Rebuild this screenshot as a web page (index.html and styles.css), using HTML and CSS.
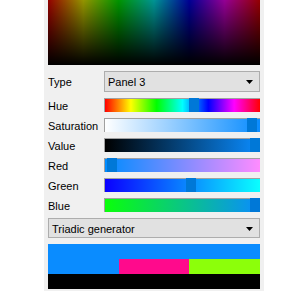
FILE: index.html
```html
<!DOCTYPE html>
<html>
<head>
  <title>Color picker</title>
  <meta name="viewport" content="width=device-width, initial-scale=1.0">
  <link rel="stylesheet" href="styles.css">
</head>
<body>
  <div class="panel">
    <div class="field"></div>

    <div class="row combo-row">
      <label>Type</label>
      <div class="combo">
        <span>Panel 3</span>
        <svg width="7" height="4" viewBox="0 0 7 4"><polygon points="0,0 7,0 3.5,4" fill="#000"/></svg>
      </div>
    </div>

    <div class="sliders">
      <div class="row">
        <label>Hue</label>
        <div class="bar hue"><div class="handle" style="left: 84px"></div></div>
      </div>
      <div class="row">
        <label>Saturation</label>
        <div class="bar sat"><div class="handle" style="left: 142px"></div></div>
      </div>
      <div class="row">
        <label>Value</label>
        <div class="bar val"><div class="handle" style="left: 145px"></div></div>
      </div>
      <div class="row">
        <label>Red</label>
        <div class="bar red"><div class="handle" style="left: 2px"></div></div>
      </div>
      <div class="row">
        <label>Green</label>
        <div class="bar green"><div class="handle" style="left: 81px"></div></div>
      </div>
      <div class="row">
        <label>Blue</label>
        <div class="bar blue"><div class="handle" style="left: 145px"></div></div>
      </div>
    </div>

    <div class="combo wide">
      <span>Triadic generator</span>
      <svg width="7" height="4" viewBox="0 0 7 4"><polygon points="0,0 7,0 3.5,4" fill="#000"/></svg>
    </div>

    <div class="swatches">
      <div class="sw full" style="background: #0a8cff"></div>
      <div class="sw" style="background: #0a8cff"></div>
      <div class="sw" style="background: #ff0a8c"></div>
      <div class="sw" style="background: #8cff0a"></div>
      <div class="sw full" style="background: #000"></div>
    </div>
  </div>
</body>
</html>
```

FILE: styles.css
```css
* {
  box-sizing: border-box;
}

body {
  margin: 0;
  background: #fff;
  font-family: "Liberation Sans", Arial, sans-serif;
  font-size: 11px;
  color: #000;
}

.panel {
  width: 220px;
  margin-left: 44px;
  padding: 0 4px 2px;
  background: #f0f0f0;
}

.field {
  height: 65px;
  background:
    linear-gradient(to bottom, rgba(0, 0, 0, 0.42), #000),
    linear-gradient(to right, #f00, #ff0, #0f0, #0ff, #00f, #f0f, #f00);
}

.row {
  display: grid;
  grid-template-columns: 56px 1fr;
  align-items: center;
}

.row label {
  padding-top: 1px;
}

.combo-row {
  margin-top: 6px;
}

.combo {
  height: 21px;
  display: flex;
  align-items: center;
  justify-content: space-between;
  padding: 1px 6px 0 3px;
  background: #e1e1e1;
  border: 1px solid #adadad;
}

.combo.wide {
  height: 20px;
  margin-top: 6px;
}

.sliders {
  display: flex;
  flex-direction: column;
  gap: 6px;
  margin-top: 6px;
}

.sliders .row {
  height: 14px;
}

.bar {
  position: relative;
  height: 14px;
  border-top: 1px solid #a0a0a0;
  border-left: 1px solid #a0a0a0;
}

.handle {
  position: absolute;
  top: -1px;
  bottom: 0;
  width: 10px;
  background: #0078d7;
}

.hue {
  background: linear-gradient(to right, #f00, #ff0, #0f0, #0ff, #00f, #f0f, #f00);
}

.sat {
  background: linear-gradient(to right, #fff, #0a8cff);
}

.val {
  background: linear-gradient(to right, #000, #0a8cff);
}

.red {
  background: linear-gradient(to right, #008cff, #ff8cff);
}

.green {
  background: linear-gradient(to right, #0a00ff, #0affff);
}

.blue {
  background: linear-gradient(to right, #0aff0a, #0a8cff);
}

.swatches {
  display: grid;
  grid-template-columns: repeat(3, 1fr);
  grid-auto-rows: 15px;
  margin-top: 6px;
}

.sw.full {
  grid-column: 1 / -1;
}
```
